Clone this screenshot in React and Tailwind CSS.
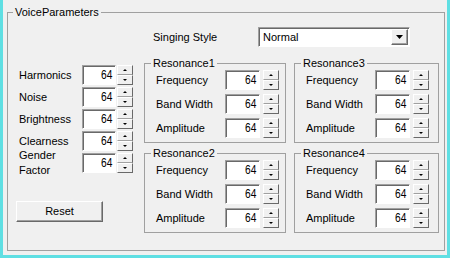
import React from "react";

function Up() {
  return <span className="block w-0 h-0 border-x-[2px] border-x-transparent border-b-[2px] border-b-black" />;
}
function Down() {
  return <span className="block w-0 h-0 border-x-[2px] border-x-transparent border-t-[2px] border-t-black" />;
}

function SpinButtons() {
  return (
    <div className="flex flex-col w-[16px] h-[20px]">
      <div className="h-[10px] flex items-center justify-center bg-[#f0f0f0] border border-t-white border-l-white border-r-[#696969] border-b-[#a0a0a0]">
        <Up />
      </div>
      <div className="h-[10px] flex items-center justify-center bg-[#f0f0f0] border border-t-white border-l-white border-r-[#696969] border-b-[#696969]">
        <Down />
      </div>
    </div>
  );
}

function Box({ narrow }) {
  return (
    <div
      className={
        narrow
          ? "w-[34px] h-[20px] bg-white border border-t-[#a0a0a0] border-l-[#a0a0a0] border-b-white border-r-white shadow-[inset_1px_1px_0_#696969] flex items-center justify-end pr-[3px]"
          : "w-[35px] h-[20px] bg-white border border-t-[#a0a0a0] border-l-[#a0a0a0] border-b-white border-r-white shadow-[inset_1px_1px_0_#696969] flex items-center justify-end pr-[3px]"
      }
    >
      <span className="inline-block scale-x-[0.85] origin-right leading-none text-[12px]">64</span>
    </div>
  );
}

function LeftRow({ label }) {
  return (
    <div className="flex items-center h-[20px]">
      <div className="w-[66px] pl-[3px]">{label}</div>
      <Box narrow />
      <div className="w-[1px]" />
      <SpinButtons />
    </div>
  );
}

function ResRow({ label }) {
  return (
    <div className="flex items-center h-[20px]">
      <div className="w-[69px]">{label}</div>
      <Box />
      <div className="w-[3px]" />
      <SpinButtons />
    </div>
  );
}

function Resonance({ n }) {
  return (
    <fieldset className="h-[87px] border border-[#a0a0a0] p-0 m-0 min-w-0">
      <legend className="ml-[6px] px-[2px] leading-[14px]">{"Resonance" + n}</legend>
      <div className="pl-[11px] flex flex-col gap-[4px]">
        <ResRow label="Frequency" />
        <ResRow label="Band Width" />
        <ResRow label="Amplitude" />
      </div>
    </fieldset>
  );
}

export default function App() {
  return (
    <div className="w-[450px] h-[258px] bg-[#f0f0f0] border-l-[3px] border-r-[3px] border-b-[3px] border-[#5fdfe3] text-black text-[11px] font-['Liberation_Sans',Arial,sans-serif] overflow-hidden">
      <fieldset className="ml-[4px] mt-[5px] w-[438px] h-[246px] border border-[#a0a0a0] p-0 min-w-0">
        <legend className="ml-[5px] px-[2px] leading-[14px]">VoiceParameters</legend>
        <div className="pl-[8px]">
          <div className="flex items-center mt-[8px] h-[20px]">
            <div className="ml-[137px] w-[105px]">Singing Style</div>
            <div className="w-[152px] h-[20px] bg-white border border-t-[#a0a0a0] border-l-[#a0a0a0] border-b-white border-r-white shadow-[inset_1px_1px_0_#696969] flex items-center">
              <div className="flex-1 pl-[4px]">Normal</div>
              <div className="w-[17px] h-[16px] mr-[1px] bg-[#f0f0f0] border border-t-white border-l-white border-r-[#696969] border-b-[#696969] shadow-[inset_-1px_-1px_0_#a0a0a0] flex items-center justify-center">
                <svg width="7" height="4" viewBox="0 0 7 4">
                  <polygon points="0,0 7,0 3.5,4" fill="#000" />
                </svg>
              </div>
            </div>
          </div>
          <div className="flex mt-[9px]">
            <div className="w-[117px] pt-[9px] flex flex-col">
              <div className="flex flex-col gap-[2px]">
                <LeftRow label="Harmonics" />
                <LeftRow label="Noise" />
                <LeftRow label="Brightness" />
                <LeftRow label="Clearness" />
                <div className="flex items-start h-[22px]">
                  <div className="w-[66px] pl-[3px] leading-[15px] -mt-[5px]">
                    Gender
                    <br />
                    Factor
                  </div>
                  <Box narrow />
                  <div className="w-[1px]" />
                  <SpinButtons />
                </div>
              </div>
              <button className="mt-[26px] w-[87px] h-[21px] bg-[#f0f0f0] border border-t-white border-l-white border-r-[#696969] border-b-[#696969] shadow-[inset_-1px_-1px_0_#a0a0a0] flex items-center justify-center">
                Reset
              </button>
            </div>
            <div className="ml-[11px] grid grid-cols-[142px_145px] gap-x-[8px] gap-y-[3px]">
              <Resonance n={1} />
              <Resonance n={3} />
              <Resonance n={2} />
              <Resonance n={4} />
            </div>
          </div>
        </div>
      </fieldset>
    </div>
  );
}
